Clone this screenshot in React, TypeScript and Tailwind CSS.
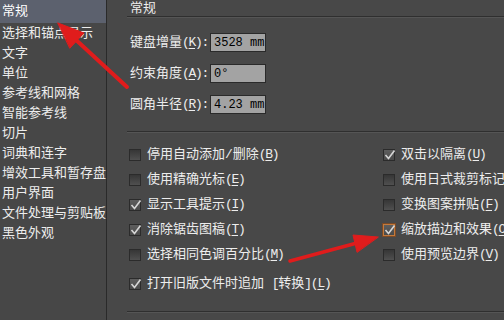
import React from "react";

const FONT = "font-['Liberation_Mono','Noto_Sans_CJK_SC',monospace]";

const navItems = [
  "选择和锚点显示",
  "文字",
  "单位",
  "参考线和网格",
  "智能参考线",
  "切片",
  "词典和连字",
  "增效工具和暂存盘",
  "用户界面",
  "文件处理与剪贴板",
  "黑色外观",
];

// half-width ascii run, squeezed to match the bitmap font
const Asc: React.FC<{ children: React.ReactNode }> = ({ children }) => (
  <span className="tracking-[-1.3px]">{children}</span>
);

const Key: React.FC<{ pre: string; k: string; post?: string }> = ({ pre, k, post }) => (
  <span className="whitespace-nowrap">
    {pre}
    <Asc>
      (<span className="underline underline-offset-2">{k}</span>){post}
    </Asc>
  </span>
);

const Box: React.FC<{ checked?: boolean; hl?: boolean }> = ({ checked, hl }) => (
  <span
    className={`relative flex h-[12px] w-[12px] shrink-0 items-center justify-center border ${
      hl ? "border-[#c47a3c] outline outline-1 outline-[#7a4a26]" : "border-[#2b2b2b]"
    } ${checked ? "bg-gradient-to-b from-[#5e5e5e] to-[#4a4a4a]" : "bg-gradient-to-b from-[#363636] to-[#505050]"}`}
  >
    {checked && (
      <svg width="12" height="12" viewBox="0 0 12 12" className="absolute -top-[1px] left-0">
        <path d="M1.5 6 L4.5 9.5 L10.5 1.5" stroke="#d6d6d6" strokeWidth="1.6" fill="none" />
      </svg>
    )}
  </span>
);

const Row: React.FC<{ checked?: boolean; hl?: boolean; children: React.ReactNode }> = ({
  checked,
  hl,
  children,
}) => (
  <div className="flex h-[25px] items-center gap-[6px]">
    <Box checked={checked} hl={hl} />
    {children}
  </div>
);

const Sep = () => (
  <div className="flex flex-col">
    <div className="h-px bg-[#2f2f2f]" />
    <div className="h-px bg-[#555555]" />
  </div>
);

const Field: React.FC<{ pre: string; k: string; value: string }> = ({ pre, k, value }) => (
  <div className="flex h-[19px] items-center">
    <div className="w-[80px]">
      <Key pre={pre} k={k} post=":" />
    </div>
    <div className="flex h-[19px] w-[56px] items-center border border-[#2a2a2a] bg-[#a3a3a3] pl-[3px] text-[12px] text-black font-['Liberation_Mono',monospace]">
      {value}
    </div>
  </div>
);

export default function App() {
  return (
    <div className={`relative flex h-[320px] w-[504px] overflow-hidden bg-[#484848] text-[13px] leading-none text-[#ededed] ${FONT}`}>
      {/* category list */}
      <aside className="flex h-full w-[107px] shrink-0 flex-col border-r border-[#2a2a2a] bg-[#474747]">
        <div className="flex h-[23px] items-center bg-[#5c616e] pl-[2px] text-white">常规</div>
        {navItems.map((t) => (
          <div key={t} className="flex h-5 items-center pl-[2px] whitespace-nowrap">
            {t}
          </div>
        ))}
      </aside>

      {/* settings */}
      <main className="flex flex-1 flex-col pl-[20px]">
        <div className="flex h-[16px] items-center pl-[3px]">常规</div>
        <Sep />

        <div className="mt-[15px] flex flex-col gap-[12px] pl-[3px]">
          <Field pre="键盘增量" k="K" value="3528 mm" />
          <Field pre="约束角度" k="A" value="0°" />
          <Field pre="圆角半径" k="R" value="4.23 mm" />
        </div>

        <div className="mt-[17px]">
          <Sep />
        </div>

        <div className="mt-[9px] grid grid-cols-[254px_1fr] pl-[2px]">
          <div className="flex flex-col">
            <Row>
              <Key pre="停用自动添加/删除" k="B" />
            </Row>
            <Row>
              <Key pre="使用精确光标" k="E" />
            </Row>
            <Row checked>
              <Key pre="显示工具提示" k="I" />
            </Row>
            <Row checked>
              <Key pre="消除锯齿图稿" k="T" />
            </Row>
            <Row>
              <Key pre="选择相同色调百分比" k="M" />
            </Row>
          </div>
          <div className="flex flex-col">
            <Row checked>
              <Key pre="双击以隔离" k="U" />
            </Row>
            <Row>
              <Key pre="使用日式裁剪标记" k="J" />
            </Row>
            <Row>
              <Key pre="变换图案拼贴" k="F" />
            </Row>
            <Row checked hl>
              <Key pre="缩放描边和效果" k="O" />
            </Row>
            <Row>
              <Key pre="使用预览边界" k="V" />
            </Row>
          </div>
        </div>

        <div className="mt-[4px] pl-[2px]">
          <Row checked>
            <span className="whitespace-nowrap">
              打开旧版文件时追加 <Asc>[</Asc>转换<Asc>]</Asc>
              <Asc>
                (<span className="underline underline-offset-2">L</span>)
              </Asc>
            </span>
          </Row>
        </div>

        <div className="mt-[15px]">
          <Sep />
        </div>
      </main>

      {/* annotation arrows */}
      <svg className="pointer-events-none absolute left-0 top-0" width="504" height="320" viewBox="0 0 504 320">
        <g fill="#e01c1c" stroke="#e01c1c" strokeLinecap="round">
          <line x1="127" y1="87" x2="75" y2="39" strokeWidth="4" />
          <polygon points="58,23 84,33 70,48" strokeWidth="1" />
          <line x1="290" y1="261" x2="357" y2="243" strokeWidth="3.5" />
          <polygon points="378,237 353,235 357,252" strokeWidth="1" />
        </g>
      </svg>
    </div>
  );
}
